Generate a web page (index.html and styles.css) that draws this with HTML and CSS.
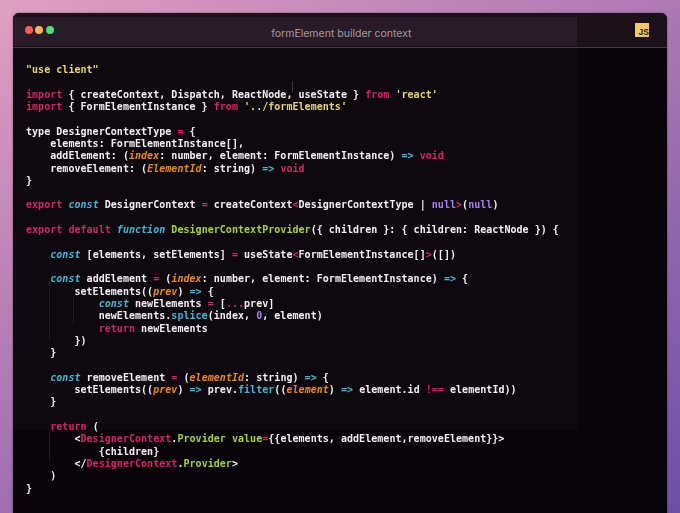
FILE: index.html
```html
<!DOCTYPE html>
<html lang="en">
<head>
<meta charset="utf-8">
<title>formElement builder context</title>
<link rel="stylesheet" href="styles.css">
</head>
<body>
<main class="window">
<header class="titlebar">
<div class="dots"><span class="dot red"></span><span class="dot amber"></span><span class="dot green"></span></div>
<div class="title">formElement builder context</div>
<div class="badge"><span>JS</span></div>
</header>
<div class="code-area">
<span class="cursor"></span>
<span class="guide guide-a"></span>
<span class="guide guide-b"></span>
<span class="guide guide-c"></span>
<pre class="code"><span class="s">"use client"</span>

<span class="k">import</span> { createContext, Dispatch, ReactNode, useState } <span class="k">from</span> <span class="s">'react'</span>
<span class="k">import</span> { FormElementInstance } <span class="k">from</span> <span class="s">'../formElements'</span>

type DesignerContextType <span class="k">=</span> {
    elements: FormElementInstance[],
    addElement: (<span class="p">index</span>: number, element: FormElementInstance) <span class="c">=&gt;</span> <span class="k">void</span>
    removeElement: (<span class="p">ElementId</span>: string) <span class="c">=&gt;</span> <span class="k">void</span>
}

<span class="k">export</span> <span class="i">const</span> DesignerContext <span class="k">=</span> createContext<span class="k">&lt;</span>DesignerContextType | <span class="n">null</span><span class="k">&gt;</span>(<span class="n">null</span>)

<span class="k">export default</span> <span class="i">function</span> <span class="g">DesignerContextProvider</span>({ children }: { children: ReactNode }) {

    <span class="i">const</span> [elements, setElements] <span class="k">=</span> useState<span class="k">&lt;</span>FormElementInstance[]<span class="k">&gt;</span>([])

    <span class="i">const</span> addElement <span class="k">=</span> (<span class="p">index</span>: number, element: FormElementInstance) <span class="c">=&gt;</span> {
        setElements((<span class="p">prev</span>) <span class="c">=&gt;</span> {
            <span class="i">const</span> newElements <span class="k">=</span> [<span class="k">...</span>prev]
            newElements.<span class="c">splice</span>(index, <span class="n">0</span>, element)
            <span class="k">return</span> newElements
        })
    }

    <span class="i">const</span> removeElement <span class="k">=</span> (<span class="p">elementId</span>: string) <span class="c">=&gt;</span> {
        setElements((<span class="p">prev</span>) <span class="c">=&gt;</span> prev.<span class="c">filter</span>((<span class="p">element</span>) <span class="c">=&gt;</span> element.id <span class="k">!==</span> elementId))
    }

    <span class="k">return</span> (
        &lt;<span class="k">DesignerContext</span>.<span class="g">Provider</span> <span class="g">value</span><span class="k">=</span>{{elements, addElement,removeElement}}&gt;
            {children}
        &lt;/<span class="k">DesignerContext</span>.<span class="g">Provider</span>&gt;
    )
}</pre>
</div>
</main>
</body>
</html>
```

FILE: styles.css
```css
* { box-sizing: border-box; }
html, body { height: 100%; margin: 0; }
body {
  overflow: hidden;
  padding: 13px 13px 0;
  background: linear-gradient(150deg, #e0a0c0 0%, #c78abb 22%, #a070b0 55%, #6c4fa8 100%);
}
.window {
  display: flex;
  flex-direction: column;
  height: 100%;
  border-radius: 6px 6px 0 0;
  overflow: hidden;
  background: #08050a;
  box-shadow: 0 0 2px rgba(30, 15, 40, .5);
}
.titlebar {
  flex: 0 0 35px;
  display: flex;
  align-items: center;
  padding: 0 18px 0 12px;
  background: linear-gradient(#2a1b29, #2a1b29) no-repeat 0 4px / 564px 29px, #1a1119;
  border-bottom: 1px solid #443a43;
}
.dots { display: flex; gap: 2.4px; margin-top: -1px; }
.dot { width: 8px; height: 8px; border-radius: 50%; }
.red { background: #fb5a55; }
.amber { background: #fdb354; }
.green { background: #4ee070; }
.title {
  flex: 1;
  margin-top: 7px;
  padding-left: 8px;
  padding-right: 14px;
  text-align: center;
  font: 10.5px/16px Inter, "Liberation Sans", sans-serif;
  color: #a49ca3;
}
.badge {
  display: flex;
  align-items: flex-end;
  justify-content: flex-end;
  width: 14px;
  height: 14px;
  margin-top: -1px;
  background: #f7c765;
  color: #2a1c10;
  font: bold 8.5px/10px "Liberation Sans", sans-serif;
}
.code-area {
  position: relative;
  flex: 1;
  padding: 16px 0 0 13px;
  background: linear-gradient(#0e090f, #0e090f) no-repeat 0 0 / 564px 382px;
}
.code {
  margin: 0;
  font: bold 10px/12.32px "DejaVu Sans Mono", "Liberation Mono", monospace;
  letter-spacing: .035px;
  color: #f2eff1;
  filter: blur(.3px);
}
.k { color: #d8245f; }
.s { color: #e2d678; }
.p { color: #e68a1e; font-style: italic; }
.i { color: #46b4d2; font-style: italic; }
.c { color: #46b4d2; }
.g { color: #a3d23c; }
.n { color: #a57ff0; }
.cursor {
  position: absolute;
  left: 279px;
  top: 33px;
  width: 1px;
  height: 11px;
  background: #3f3a40;
}
.guide { position: absolute; width: 1px; background: #221d24; }
.guide-a { left: 36px; top: 233px; height: 60px; }
.guide-b { left: 60px; top: 248px; height: 28px; }
.guide-c { left: 36px; top: 383px; height: 30px; }
```
